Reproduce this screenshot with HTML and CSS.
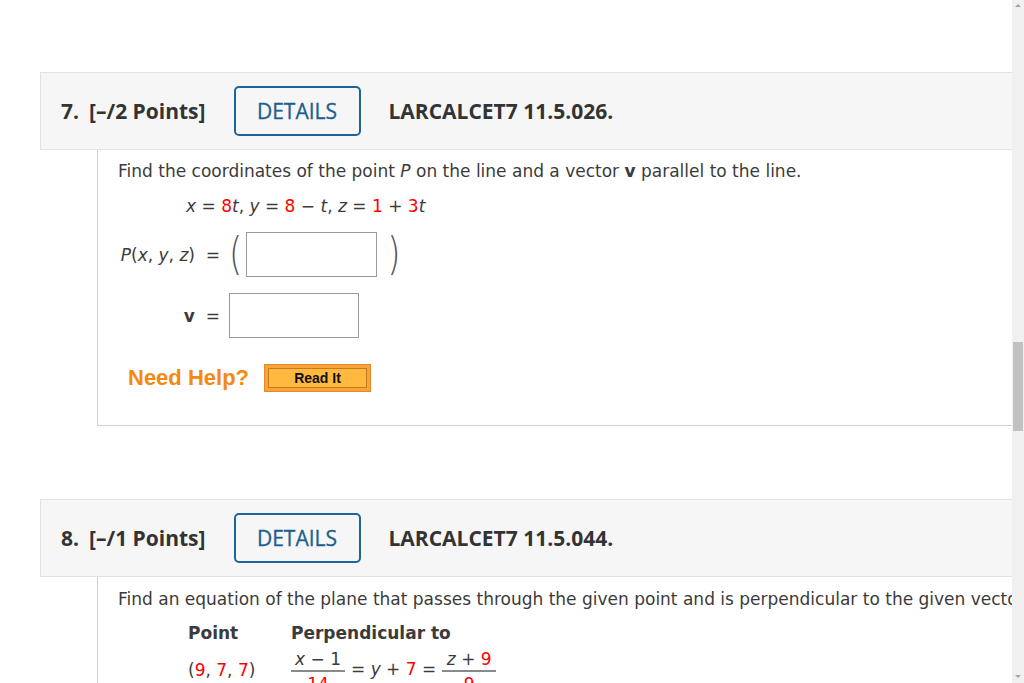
FILE: index.html
```html
<!DOCTYPE html>
<html>
<head>
<meta charset="utf-8">
<link rel="stylesheet" href="styles.css">
</head>
<body>
<div class="page">
  <div class="content">
    <div class="card">
      <div class="card-head">
        <span class="qnum">7.</span>
        <span class="points">[–/2 Points]</span>
        <span class="details">DETAILS</span>
        <span class="code">LARCALCET7 11.5.026.</span>
      </div>
      <div class="card-body body1">
        <p class="prompt">Find the coordinates of the point <i>P</i> on the line and a vector <b>v</b> parallel to the line.</p>
        <p class="eq"><i>x</i> = <span class="red">8</span><i>t</i>, <i>y</i> = <span class="red">8</span> − <i>t</i>, <i>z</i> = <span class="red">1</span> + <span class="red">3</span><i>t</i></p>
        <div class="answers">
          <div class="lbl"><i>P</i>(<i>x</i>, <i>y</i>, <i>z</i>) &nbsp;=</div>
          <div class="field"><span class="paren">(</span><span class="box box1"></span><span class="paren pr">)</span></div>
          <div class="lbl"><b>v</b> &nbsp;=</div>
          <div class="field"><span class="box box2"></span></div>
        </div>
        <div class="help">
          <span class="need">Need Help?</span>
          <span class="readit"><span class="readit-in">Read It</span></span>
        </div>
      </div>
    </div>
    <div class="card card2">
      <div class="card-head">
        <span class="qnum">8.</span>
        <span class="points">[–/1 Points]</span>
        <span class="details">DETAILS</span>
        <span class="code">LARCALCET7 11.5.044.</span>
      </div>
      <div class="card-body body2">
        <p class="prompt nowrap">Find an equation of the plane that passes through the given point and is perpendicular to the given vector or line.</p>
        <div class="pt-table">
          <div class="th th1">Point</div>
          <div class="th">Perpendicular to</div>
          <div class="pt">(<span class="red">9</span>, <span class="red">7</span>, <span class="red">7</span>)</div>
          <div class="line-eq">
            <span class="frac"><span class="num"><i>x</i> − 1</span><span class="den"><span class="red">14</span></span></span>
            <span class="mid">= <i>y</i> + <span class="red">7</span> =</span>
            <span class="frac"><span class="num"><i>z</i> + <span class="red">9</span></span><span class="den"><span class="red">9</span></span></span>
          </div>
        </div>
      </div>
    </div>
  </div>
  <div class="scrollbar">
    <div class="arrow up"></div>
    <div class="track"><div class="thumb"></div></div>
    <div class="arrow down"></div>
  </div>
</div>
</body>
</html>
```
FILE: styles.css
```css
html, body {
  margin: 0;
  padding: 0;
  background: #fff;
}
body {
  width: 1024px;
  height: 683px;
  overflow: hidden;
}
.page {
  display: flex;
  width: 1024px;
  height: 683px;
}
.content {
  width: 1012px;
  height: 683px;
  overflow: hidden;
  padding-top: 72px;
  box-sizing: border-box;
}
.card {
  margin-left: 40px;
  width: 1100px;
}
.card2 {
  margin-top: 73px;
}
.card-head {
  height: 76px;
  background: #f6f6f6;
  border: 1px solid #e2e2e2;
  display: flex;
  align-items: center;
  padding-left: 20px;
  font-family: "Open Sans", sans-serif;
  font-weight: 700;
  font-size: 21px;
  color: #333;
}
.qnum {
  margin-right: 10px;
}
.points {
  margin-right: 28px;
}
.details {
  box-sizing: border-box;
  width: 127px;
  height: 50px;
  border: 2px solid #1b659c;
  border-radius: 5px;
  display: flex;
  align-items: center;
  justify-content: center;
  font-weight: 400;
  font-size: 21px;
  color: #1b5f93;
  margin-right: 28px;
  -webkit-text-stroke: 0.3px #1b5f93;
}
.code {
  color: #333;
}
.card-body {
  margin-left: 57px;
  border-left: 1px solid #d0d0d0;
  border-bottom: 1px solid #d0d0d0;
  padding-left: 20px;
  font-family: "DejaVu Sans", Verdana, sans-serif;
  font-size: 17px;
  color: #3b3b3b;
}
.body1 {
  height: 276px;
  box-sizing: border-box;
  padding-top: 11px;
}
.body2 {
  border-bottom: none;
  padding-top: 12px;
  height: 110px;
}
.prompt {
  margin: 0;
  line-height: 20px;
}
.nowrap {
  white-space: nowrap;
}
.eq {
  margin: 15px 0 0 68px;
  line-height: 20px;
}
.red {
  color: #f00;
}
.answers {
  margin-top: 16px;
  display: grid;
  grid-template-columns: 102px auto;
  column-gap: 9px;
  row-gap: 16px;
  align-items: center;
  justify-content: start;
}
.lbl {
  text-align: right;
  white-space: nowrap;
}
.field {
  display: flex;
  align-items: center;
}
.paren {
  font-family: "DejaVu Sans", sans-serif;
  font-weight: 200;
  font-size: 34px;
  line-height: 45px;
  color: #555;
  transform: scaleY(1.3);
  margin-right: 4px;
}
.pr {
  margin-left: 10px;
  margin-right: 0;
}
.box {
  display: block;
  height: 45px;
  box-sizing: border-box;
  border: 1px solid #9a9a9a;
  background: #fff;
}
.box1 {
  width: 131px;
}
.box2 {
  width: 130px;
}
.help {
  margin-top: 26px;
  margin-left: 10px;
  display: flex;
  align-items: center;
}
.need {
  font-family: "Liberation Sans", Arial, sans-serif;
  font-weight: 700;
  font-size: 22px;
  color: #f5880f;
  margin-right: 15px;
}
.readit {
  display: block;
  box-sizing: border-box;
  width: 107px;
  height: 28px;
  border: 1px solid #e48a2a;
  background: #f7a43a;
  padding: 3px 3px;
}
.readit-in {
  display: flex;
  align-items: center;
  justify-content: center;
  height: 100%;
  box-sizing: border-box;
  background: #ffb93e;
  border: 1px solid #c9791c;
  font-family: "Liberation Sans", Arial, sans-serif;
  font-weight: 700;
  font-size: 14px;
  color: #111;
}
.pt-table {
  margin-left: 70px;
  margin-top: 14px;
  display: grid;
  grid-template-columns: 103px auto;
  row-gap: 5px;
  justify-content: start;
}
.th {
  font-weight: 700;
  color: #3b3b3b;
  line-height: 20px;
}
.pt {
  padding-top: 12px;
  line-height: 20px;
}
.line-eq {
  display: flex;
  align-items: flex-start;
}
.frac {
  display: inline-flex;
  flex-direction: column;
  align-items: center;
}
.num {
  padding: 0 4px 0;
  border-bottom: 2px solid #8a8a8a;
  line-height: 22px;
  min-width: 46px;
  text-align: center;
}
.den {
  line-height: 20px;
  padding-top: 2px;
}
.mid {
  margin: 11px 6px 0;
  line-height: 20px;
}
.scrollbar {
  width: 12px;
  height: 683px;
  background: #f0f0f0;
  display: flex;
  flex-direction: column;
}
.arrow {
  height: 12px;
  position: relative;
}
.arrow.up::after,
.arrow.down::after {
  content: "";
  position: absolute;
  left: 3px;
  width: 0;
  height: 0;
  border-left: 3px solid transparent;
  border-right: 3px solid transparent;
}
.arrow.up::after {
  top: 4px;
  border-bottom: 3px solid #a3a3a3;
}
.arrow.down::after {
  top: 4px;
  border-top: 3px solid #a3a3a3;
}
.track {
  flex: 1;
  padding-top: 330px;
}
.thumb {
  margin-left: 1px;
  width: 10px;
  height: 89px;
  background: #c1c1c1;
}
```
